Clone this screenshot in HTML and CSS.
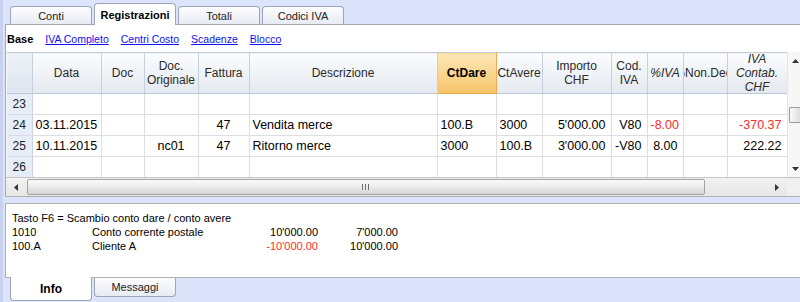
FILE: index.html
```html
<!DOCTYPE html>
<html lang="it">
<head>
    <meta charset="UTF-8">
    <meta name="viewport" content="width=device-width, initial-scale=1.0">
    <title>Registrazioni</title>
    <link rel="stylesheet" href="styles.css">
</head>
<body>

<div class="app">
    <div class="tabs-top">
        <div class="tab">Conti</div>
        <div class="tab active">Registrazioni</div>
        <div class="tab">Totali</div>
        <div class="tab">Codici IVA</div>
    </div>

    <div class="panel-main">
        <div class="views">
            <span class="view-current">Base</span>
            <a class="view-link" href="#">IVA Completo</a>
            <a class="view-link" href="#">Centri Costo</a>
            <a class="view-link" href="#">Scadenze</a>
            <a class="view-link" href="#">Blocco</a>
        </div>

        <div class="grid-area">
            <div class="grid-clip">
                <table class="grid">
                    <colgroup>
                        <col style="width:25px"><col style="width:69px"><col style="width:43px">
                        <col style="width:54px"><col style="width:51px"><col style="width:188px">
                        <col style="width:59px"><col style="width:46px"><col style="width:69px">
                        <col style="width:36px"><col style="width:36px"><col style="width:44px">
                        <col style="width:60px">
                    </colgroup>
                    <thead>
                        <tr>
                            <th class="num"><div class="hd"></div></th>
                            <th><div class="hd">Data</div></th>
                            <th><div class="hd">Doc</div></th>
                            <th><div class="hd">Doc.<br>Originale</div></th>
                            <th><div class="hd">Fattura</div></th>
                            <th><div class="hd">Descrizione</div></th>
                            <th class="hl"><div class="hd">CtDare</div></th>
                            <th><div class="hd">CtAvere</div></th>
                            <th><div class="hd">Importo<br>CHF</div></th>
                            <th><div class="hd">Cod.<br>IVA</div></th>
                            <th class="it"><div class="hd">%IVA</div></th>
                            <th><div class="hd nowrap">%Non.Ded.</div></th>
                            <th class="it"><div class="hd">IVA<br>Contab.<br>CHF</div></th>
                        </tr>
                    </thead>
                    <tbody>
                        <tr>
                            <td class="num">23</td>
                            <td></td><td></td><td></td><td></td><td></td><td></td>
                            <td></td><td></td><td></td><td></td><td></td><td></td>
                        </tr>
                        <tr>
                            <td class="num">24</td>
                            <td>03.11.2015</td>
                            <td></td>
                            <td class="c"></td>
                            <td class="c">47</td>
                            <td>Vendita merce</td>
                            <td>100.B</td>
                            <td>3000</td>
                            <td class="r">5'000.00</td>
                            <td class="r">V80</td>
                            <td class="r neg">-8.00</td>
                            <td></td>
                            <td class="r neg">-370.37</td>
                        </tr>
                        <tr>
                            <td class="num">25</td>
                            <td>10.11.2015</td>
                            <td></td>
                            <td class="c">nc01</td>
                            <td class="c">47</td>
                            <td>Ritorno merce</td>
                            <td>3000</td>
                            <td>100.B</td>
                            <td class="r">3'000.00</td>
                            <td class="r">-V80</td>
                            <td class="r">8.00</td>
                            <td></td>
                            <td class="r">222.22</td>
                        </tr>
                        <tr>
                            <td class="num">26</td>
                            <td></td><td></td><td></td><td></td><td></td><td></td>
                            <td></td><td></td><td></td><td></td><td></td><td></td>
                        </tr>
                        <tr>
                            <td class="num"></td>
                            <td></td><td></td><td></td><td></td><td></td><td></td>
                            <td></td><td></td><td></td><td></td><td></td><td></td>
                        </tr>
                    </tbody>
                </table>
            </div>

            <!-- vertical scrollbar -->
            <div class="vscroll">
                <div class="vs-btn up">
                    <svg width="7" height="4" viewBox="0 0 7 4"><polygon points="0,4 3.5,0 7,4" fill="#333"/></svg>
                </div>
                <div class="vs-track"><div class="vs-thumb"></div></div>
                <div class="vs-btn down">
                    <svg width="7" height="4" viewBox="0 0 7 4"><polygon points="0,0 3.5,4 7,0" fill="#333"/></svg>
                </div>
            </div>
        </div>

        <!-- horizontal scrollbar -->
        <div class="hscroll-row">
            <div class="hscroll">
                <div class="hs-btn">
                    <svg width="4" height="7" viewBox="0 0 4 7"><polygon points="4,0 0,3.5 4,7" fill="#333"/></svg>
                </div>
                <div class="hs-thumb">
                    <span class="grip"></span><span class="grip"></span><span class="grip"></span>
                </div>
                <div class="hs-rest"></div>
                <div class="hs-btn">
                    <svg width="4" height="7" viewBox="0 0 4 7"><polygon points="0,0 4,3.5 0,7" fill="#333"/></svg>
                </div>
            </div>
            <div class="corner"></div>
        </div>
    </div>

    <div class="panel-info">
        <div class="info-line">Tasto F6 = Scambio conto dare / conto avere</div>
        <div class="info-row">
            <span>1010</span>
            <span>Conto corrente postale</span>
            <span class="amt">10'000.00</span>
            <span class="amt">7'000.00</span>
        </div>
        <div class="info-row">
            <span>100.A</span>
            <span>Cliente A</span>
            <span class="amt neg">-10'000.00</span>
            <span class="amt">10'000.00</span>
        </div>
    </div>

    <div class="tabs-bottom">
        <div class="btab active">Info</div>
        <div class="btab">Messaggi</div>
    </div>
</div>

</body>
</html>
```

FILE: styles.css
```css
body {
    margin: 0;
    width: 800px;
    height: 302px;
    overflow: hidden;
    background: #dce4fb; /* window background */
    font-family: "Liberation Sans", Arial, sans-serif;
    font-size: 11px;
    color: #000;
}
.app {
    height: 302px;
    border-left: 3px solid #c8d2ee;
    padding-left: 2px;
    display: flex;
    flex-direction: column;
}

/* top tabs */
.tabs-top {
    height: 24px;
    flex: none;
    display: flex;
    align-items: flex-end;
    gap: 2px;
    padding-left: 5px;
}
.tab {
    width: 80px;
    height: 17px;
    border: 1px solid #9ea6b6;
    border-bottom: none;
    border-radius: 4px 4px 0 0;
    background: linear-gradient(#fdfdfe, #e7ebf3);
    display: flex;
    align-items: center;
    justify-content: center;
    color: #222;
}
.tab.active {
    height: 21px;
    margin-bottom: -1px;
    background: #fff;
    font-weight: bold;
    color: #000;
    position: relative;
    z-index: 1;
}

/* main panel */
.panel-main {
    flex: none;
    height: 171px;
    background: #fff;
    border-top: 1px solid #a4a8b0;
    border-left: 1px solid #a4a8b0;
    border-bottom: 1px solid #b0b0b0;
}
.views {
    height: 27px;
    display: flex;
    align-items: center;
    gap: 12px;
    padding-left: 1px;
    padding-top: 1px;
    box-sizing: border-box;
}
.view-current {
    font-weight: bold;
}
.view-link {
    font-size: 10.5px;
    color: #1010f0;
    text-decoration: underline;
}

.grid-area {
    height: 125px;
    display: flex;
    padding-left: 1px;
}
.grid-clip {
    width: 780px;
    height: 125px;
    overflow: hidden;
}
.grid {
    width: 780px;
    table-layout: fixed;
    border-collapse: collapse;
    font-size: 12.5px;
}
.grid th {
    height: 40px;
    padding: 0;
    font-weight: normal;
    font-size: 12px;
    color: #2a2a2a;
    background: linear-gradient(#fbfcfd, #e4e9f0);
    border-right: 1px solid #c3d0de;
    border-bottom: 1px solid #bccad8;
    border-top: 1px solid #c3ccd6;
}
.grid th.num {
    background: linear-gradient(#eef2f7, #dce4ee);
}
.grid th.hl {
    background: linear-gradient(#fde7b6, #f7c46a);
    border-right: 1px solid #eeaa50;
    border-bottom: 1px solid #eeaa50;
    font-weight: bold;
    color: #000;
}
.grid th.it {
    font-style: italic;
}
.hd {
    height: 39px;
    line-height: 14px;
    overflow: hidden;
    display: flex;
    align-items: center;
    justify-content: center;
    text-align: center;
}
.hd.nowrap {
    white-space: nowrap;
}
.grid td {
    height: 20px;
    padding: 0 3px;
    border-right: 1px solid #dcdee2;
    border-bottom: 1px solid #dcdee2;
    white-space: nowrap;
    overflow: hidden;
}
.grid td.num {
    background: #e6edf7;
    border-right: 1px solid #c8d4e4;
    border-bottom: 1px solid #d4dde9;
    text-align: center;
    font-size: 12px;
    color: #222;
}
.grid td.c {
    text-align: center;
}
.grid td.r {
    text-align: right;
    padding-right: 5px;
}
.neg {
    color: #ff2a2a;
}

/* scrollbars */
.vscroll {
    width: 13px;
    height: 125px;
    display: flex;
    flex-direction: column;
    background: #f7f7f7;
    border-left: 1px solid #e4e4e4;
    box-sizing: border-box;
}
.vs-btn {
    height: 18px;
    display: flex;
    align-items: center;
    justify-content: center;
    padding-left: 2px;
}
.vs-btn.down {
    height: 16px;
}
.vs-track {
    flex: 1;
    padding-top: 37px;
    padding-left: 1px;
}
.vs-thumb {
    height: 14px;
    border: 1px solid #9a9a9a;
    border-right: none;
    border-radius: 2px 0 0 2px;
    background: linear-gradient(90deg, #fafafa, #dedede);
}
.hscroll-row {
    height: 19px;
    display: flex;
}
.hscroll {
    width: 781px;
    display: flex;
    align-items: stretch;
    background: linear-gradient(#f2f2f2, #e6e6e6);
    border-top: 1px solid #c4c4c4;
    box-sizing: border-box;
}
.hs-btn {
    width: 20px;
    display: flex;
    align-items: center;
    justify-content: center;
}
.hs-thumb {
    width: 676px;
    margin: 1px 0 1px 1px;
    border: 1px solid #a2a2a2;
    border-radius: 2px;
    background: linear-gradient(#fbfbfb, #ececec 45%, #d6d6d6);
    display: flex;
    align-items: center;
    justify-content: center;
    gap: 1px;
}
.grip {
    width: 1px;
    height: 6px;
    background: #6a6a6a;
    border-right: 1px solid #f0f0f0;
}
.hs-rest {
    flex: 1;
}
.corner {
    flex: 1;
    background: #f0f0f0;
    border-top: 1px solid #c4c4c4;
}

/* info panel */
.panel-info {
    flex: none;
    margin-top: 6px;
    height: 66px;
    background: #fff;
    border-top: 1px solid #b0b0b0;
    border-left: 1px solid #b0b0b0;
    border-bottom: 1px solid #b0b0b0;
    padding: 7px 0 0 6px;
    line-height: 14px;
}
.info-row {
    display: grid;
    grid-template-columns: 80px 140px 86px 80px;
}
.amt {
    text-align: right;
}

/* bottom tabs */
.tabs-bottom {
    flex: none;
    display: flex;
    align-items: flex-start;
    gap: 2px;
    padding-left: 5px;
}
.btab {
    width: 80px;
    height: 18px;
    border: 1px solid #9ea6b6;
    border-top: none;
    border-radius: 0 0 4px 4px;
    background: linear-gradient(#fdfdfe, #e7ebf3);
    display: flex;
    align-items: center;
    justify-content: center;
    color: #222;
}
.btab.active {
    height: 23px;
    margin-top: -1px;
    background: #fff;
    font-weight: bold;
    font-size: 12px;
    color: #000;
    position: relative;
    z-index: 1;
}
```
